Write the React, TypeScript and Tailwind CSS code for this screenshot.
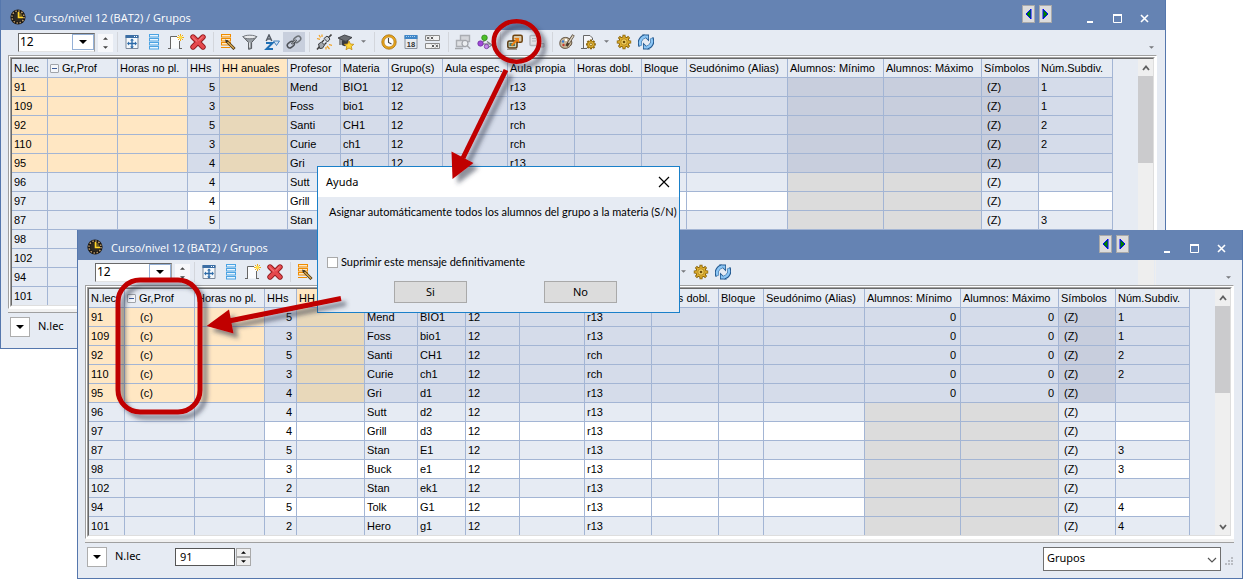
import React, { useId, useState } from 'react';
import clsx from 'clsx';

interface Lesson {
  id: string;
  hours: number;
  teacher: string;
  subject: string;
  room: string;
  subdivision: string;
}

const LESSONS: Lesson[] = [
  { id: '91', hours: 5, teacher: 'Mend', subject: 'BIO1', room: 'r13', subdivision: '1' },
  { id: '109', hours: 3, teacher: 'Foss', subject: 'bio1', room: 'r13', subdivision: '1' },
  { id: '92', hours: 5, teacher: 'Santi', subject: 'CH1', room: 'rch', subdivision: '2' },
  { id: '110', hours: 3, teacher: 'Curie', subject: 'ch1', room: 'rch', subdivision: '2' },
  { id: '95', hours: 4, teacher: 'Gri', subject: 'd1', room: 'r13', subdivision: '' },
  { id: '96', hours: 4, teacher: 'Sutt', subject: 'd2', room: 'r13', subdivision: '' },
  { id: '97', hours: 4, teacher: 'Grill', subject: 'd3', room: 'r13', subdivision: '' },
  { id: '87', hours: 5, teacher: 'Stan', subject: 'E1', room: 'r13', subdivision: '3' },
  { id: '98', hours: 3, teacher: 'Buck', subject: 'e1', room: 'r13', subdivision: '3' },
  { id: '102', hours: 2, teacher: 'Stan', subject: 'ek1', room: 'r13', subdivision: '' },
  { id: '94', hours: 5, teacher: 'Tolk', subject: 'G1', room: 'r13', subdivision: '4' },
  { id: '101', hours: 2, teacher: 'Hero', subject: 'g1', room: 'r13', subdivision: '4' },
];

// The first five lessons are the selected block
const SELECTED_COUNT = 5;

const COLUMNS = [
  { title: 'N.lec', width: 'w-[36px]' },
  { title: 'Gr,Prof', width: 'w-[70px]' },
  { title: 'Horas no pl.', width: 'w-[70px]' },
  { title: 'HHs', width: 'w-[32px]' },
  { title: 'HH anuales', width: 'w-[68px]' },
  { title: 'Profesor', width: 'w-[53px]' },
  { title: 'Materia', width: 'w-[48px]' },
  { title: 'Grupo(s)', width: 'w-[54px]' },
  { title: 'Aula espec.', width: 'w-[65px]' },
  { title: 'Aula propia', width: 'w-[67px]' },
  { title: 'Horas dobl.', width: 'w-[67px]' },
  { title: 'Bloque', width: 'w-[45px]' },
  { title: 'Seudónimo (Alias)', width: 'w-[101px]' },
  { title: 'Alumnos: Mínimo', width: 'w-[96px]' },
  { title: 'Alumnos: Máximo', width: 'w-[98px]' },
  { title: 'Símbolos', width: 'w-[57px]' },
  { title: 'Núm.Subdiv.', width: 'w-[74px]' },
];

function Svg({ children, className = 'size-4' }: { children: React.ReactNode; className?: string }) {
  return (
    <svg viewBox="0 0 16 16" className={clsx('shrink-0', className)} fill="none" aria-hidden="true">
      {children}
    </svg>
  );
}

const AppIcon = () => (
  <Svg>
    <circle cx="8" cy="8" r="7.6" fill="#1b1712" />
    <circle cx="8" cy="8" r="6" stroke="#b99a6b" strokeWidth="1.6" strokeDasharray="1.4 1.7" />
    <circle cx="8" cy="8" r="4.6" fill="#2e2a22" />
    <path d="M8 8V3.5A4.5 4.5 0 0 1 12.5 8z" fill="#6b5a20" />
    <path d="M8.5 3v5.5H13" stroke="#ffd42a" strokeWidth="1.6" />
  </Svg>
);

const GridPlusIcon = () => (
  <Svg>
    <path d="M2 1.5h12v13H2z" fill="#f4f8fc" stroke="#7d8a9c" />
    <path d="M1.5 1h13v3h-13z" fill="#3b6ea5" />
    <path d="M10 2h1v1h-1zM12 2h1v1h-1z" fill="#fff" />
    <path d="M8 5.5v8M4 9.5h8" stroke="#2c6aa8" strokeWidth="1.4" />
    <path d="M8 4.5l2 2H6zM8 14.5l2-2H6zM3 9.5l2-2v4zM13 9.5l-2-2v4z" fill="#2c6aa8" />
  </Svg>
);

const RowsIcon = () => (
  <Svg>
    {[1, 5, 9, 13].map((y) => (
      <rect key={y} x="3.5" y={y - 0.5} width="9" height="2.5" fill="#eaf6ff" stroke="#4ba3e3" />
    ))}
  </Svg>
);

const NewPageIcon = () => (
  <Svg>
    <path d="M2.5 2.5h9v12h-9z" fill="#fbfcfe" />
    <path d="M2.5 14V2.5H9M11.5 7v7" stroke="#666" />
    <path d="M0 14.5h3M11 14.5h3" stroke="#666" />
    <path d="M12.5 0v7M9 3.5h7M10 1l5 5M15 1l-5 5" stroke="#f0a818" />
    <circle cx="12.5" cy="3.5" r="1.8" fill="#ffe14a" />
  </Svg>
);

const DeleteIcon = () => (
  <Svg>
    <path d="M3 3l10 10M13 3L3 13" stroke="#8e1a1e" strokeWidth="5.4" strokeLinecap="round" />
    <path d="M3 3l10 10M13 3L3 13" stroke="#e5484d" strokeWidth="3.8" strokeLinecap="round" />
    <path d="M2.6 3.2L7 7.4M12.6 2.8L9 6.4" stroke="#f58a8d" strokeLinecap="round" />
  </Svg>
);

const RowsPencilIcon = () => (
  <Svg>
    {[1, 5, 9].map((y) => (
      <rect key={y} x="1.5" y={y - 0.5} width="9" height="2.5" fill="#ffe9c4" stroke="#f08c00" />
    ))}
    <path d="M1 13.5h9" stroke="#f08c00" />
    <path d="M6.5 7l8 8" stroke="#4a3412" strokeWidth="3" />
    <path d="M7.5 8l6.5 6.5" stroke="#d8a850" strokeWidth="1.4" />
    <path d="M5 5.5l3 1-2 2z" fill="#333" />
  </Svg>
);

const FunnelIcon = () => (
  <Svg>
    <path d="M.8 2.5h14L9.6 8.5v6l-3 .8V8.5z" fill="#9aa0a6" stroke="#55595e" />
    <ellipse cx="7.8" cy="3" rx="6.6" ry="1.8" fill="#e8eaec" stroke="#666a70" strokeWidth=".9" />
    <path d="M7.6 8.5v5" stroke="#e2e4e6" />
  </Svg>
);

const SortIcon = () => (
  <Svg>
    <path d="M2.2 7L5 1l2.8 6M3.3 5h3.4" stroke="#555c66" strokeWidth="1.5" />
    <path d="M2 9h6.5L2.5 15H9" stroke="#1f6fb5" strokeWidth="2" />
    <path d="M9.5 7h6l-3 4.5z" fill="#cfe2f5" stroke="#3776b4" strokeWidth=".9" />
  </Svg>
);

const LinkIcon = () => (
  <Svg>
    <rect x="1" y="8" width="7.500" height="5" rx="2.5" transform="rotate(-38 5 10.5)" stroke="#4e5258" strokeWidth="1.500" />
    <rect x="7.500" y="3" width="7.500" height="5" rx="2.5" transform="rotate(-38 11 5.5)" stroke="#6d7278" strokeWidth="1.500" />
    <path d="M5.500 10l5-4" stroke="#44484e" strokeWidth="1.800" />
    <path d="M6 9.500l4-3.200" stroke="#c5c8cc" strokeWidth=".8" />
  </Svg>
);

const PlugIcon = () => (
  <Svg>
    <path d="M1 15.5l3-3.5M12 4l3.5-3.5" stroke="#444" strokeWidth="1.6" />
    <path d="M2.5 10l3-2 3 3-2 3.2-2.8.3z" fill="#a4a8ae" stroke="#3c3f44" />
    <path d="M8 4.5L11 2l3 3-2.5 3z" fill="#c9cdd2" stroke="#3c3f44" />
    <path d="M6 8l2-2M8.5 10.5l2-2" stroke="#333" strokeWidth="1.2" />
    <path d="M3 1l1.5 2.5M1 4.5l3 .8M6 .5v2.5M11 12l2.5 3M13 10.5l3 1M10 13v2.5" stroke="#f0a020" strokeWidth="1.2" />
  </Svg>
);

const GraduateIcon = () => (
  <Svg>
    <path d="M0 4l6.5-3L14 3.5 8 7.5z" fill="#6a6d72" stroke="#2e3033" strokeWidth=".8" />
    <path d="M3.5 5.8v5c2 1.8 5 1.8 7 0v-5L8 7.5z" fill="#3a3c40" />
    <path d="M2 5v6" stroke="#333" />
    <path d="M11 7l1.4 3 3.4.3-2.5 2.2.7 3.2-3-1.7-3 1.7.8-3.2L6.300 10.300l3.300-.3z" fill="#ffd83a" stroke="#c08a10" strokeWidth=".8" />
  </Svg>
);

const ClockIcon = () => (
  <Svg>
    <circle cx="8" cy="8" r="7.2" fill="#e8a51c" stroke="#a8700c" strokeWidth=".8" />
    <circle cx="8" cy="8" r="5" fill="#fbfcff" stroke="#b07c18" strokeWidth=".7" />
    <path d="M7.500 4v4.500l3 1.500" stroke="#444" strokeWidth="1.1" />
  </Svg>
);

const CalendarIcon = () => (
  <Svg>
    <path d="M2 1.500h12v13H2z" fill="#e9ecf0" stroke="#8a929e" />
    <path d="M1.500 1h13v4h-13z" fill="#3f86c8" />
    <path d="M3 2.500h10" stroke="#a8d0f2" strokeDasharray="1 1" />
    <text x="8" y="13" textAnchor="middle" fontSize="7.500" fontWeight="700" fill="#333" fontFamily="Liberation Sans, sans-serif">18</text>
  </Svg>
);

const MatrixIcon = () => (
  <Svg>
    <path d="M.5 1.500h14v5H.5zM.5 9.500h14v5H.5z" fill="#f2f2f2" stroke="#8a8a8a" />
    <path d="M2 2.800l2.400 2.400M4.400 2.800L2 5.200M5.800 2.800l2.400 2.400M8.200 2.800L5.800 5.200M6.800 10.800l2.400 2.400M9.200 10.800l-2.400 2.400M10.600 10.800l2.400 2.400M13 10.800l-2.400 2.400" stroke="#333" strokeWidth=".8" />
  </Svg>
);

const SearchWindowsIcon = () => (
  <Svg>
    <path d="M5.500 1.500h9v6h-9z" fill="#d4d6da" stroke="#aaadb2" strokeWidth="1.400" />
    <path d="M1.500 6.500h9v6h-9z" fill="#dfe1e4" stroke="#aaadb2" strokeWidth="1.400" />
    <circle cx="10" cy="9.500" r="3" fill="#eceef1" stroke="#9fa2a8" strokeWidth="1.200" />
    <path d="M12.200 11.700l3 3M0 14.500h8" stroke="#a4a7ac" strokeWidth="1.400" />
  </Svg>
);

const NodesIcon = () => (
  <Svg>
    <path d="M4 10l6-5.500M4 10h9" stroke="#666" />
    <path d="M10 7.500l5 3.500-4 2.500" stroke="#777b80" strokeWidth="1.200" />
    <circle cx="7.500" cy="3.800" r="2.800" fill="#4cbf2a" stroke="#2a7d14" strokeWidth=".7" />
    <circle cx="3.500" cy="9.500" r="2.700" fill="#a04ad8" stroke="#652696" strokeWidth=".7" />
    <circle cx="9.500" cy="12.500" r="2.200" fill="#c88ae8" stroke="#652696" strokeWidth=".7" />
  </Svg>
);

const AssignIcon = () => (
  <Svg>
    <rect x="6" y="1.200" width="9.200" height="7" rx="1.500" fill="#d8c8a8" stroke="#6e4410" strokeWidth="1.500" />
    <rect x=".8" y="7" width="9.200" height="7" rx="1.500" fill="#c9cfb8" stroke="#5a3a10" strokeWidth="1.500" />
    <path d="M2.500 9h5.500v3H2.500z" fill="#4c7a6a" />
    <path d="M4.500 11.500l5-5" stroke="#f08010" strokeWidth="2" />
    <path d="M7 4h5v5z" fill="#f08010" />
    <path d="M0 15.300h10" stroke="#8a8478" />
  </Svg>
);

const DisabledRowsIcon = () => (
  <Svg>
    <rect x="1" y="1.500" width="8" height="10" rx="1" fill="#dfe1e5" stroke="#b4b7bc" strokeWidth="1.400" />
    <path d="M3 4.500h4M3 7h4" stroke="#b4b7bc" />
    <path d="M8 9.500h7v3.500H8z" fill="#d5d7db" stroke="#aeb1b6" />
  </Svg>
);

const PaletteIcon = () => (
  <Svg>
    <path d="M1 8C1.500 4 6 2.500 9 4s5 4 3 7-5 4-8 3-3.500-4-3-6z" fill="#c8b89a" stroke="#5a4a38" />
    <circle cx="4" cy="7.500" r="1.200" fill="#3b7ad0" />
    <circle cx="7" cy="6" r="1.200" fill="#fff" />
    <circle cx="4.500" cy="11" r="1.200" fill="#c83a30" />
    <path d="M14.500 1L7.500 12" stroke="#4a3a2a" strokeWidth="2.800" />
    <path d="M14.300 1.500L9.500 9" stroke="#d8d0c0" strokeWidth="1.400" />
  </Svg>
);

const GEAR_TEETH = 'M8 .8v14.400M.8 8h14.400M2.900 2.900l10.200 10.200M13.100 2.900L2.900 13.100';

const GearIcon = () => (
  <Svg>
    <path d={GEAR_TEETH} stroke="#8a6408" strokeWidth="3" />
    <circle cx="8" cy="8" r="5.200" fill="#e0b030" stroke="#8a6408" />
    <path d="M8 1.500v13M1.500 8h13M3.400 3.400l9.200 9.200M12.600 3.400l-9.200 9.200" stroke="#e0b030" strokeWidth="1.300" />
    <circle cx="8" cy="8" r="3.200" fill="#f0cf60" stroke="#a87c14" strokeWidth=".8" />
    <circle cx="8" cy="8" r="1.300" fill="#6e5008" />
  </Svg>
);

const PageGearIcon = () => (
  <Svg>
    <path d="M2.500 14.500V1.500h7l2 2v4" fill="#f6f7fa" />
    <path d="M2.500 14V1.500h6.500l2.500 2.500v2M0 14.500h6" stroke="#666" />
    <g transform="translate(4.500 5) scale(.68)">
      <path d={GEAR_TEETH} stroke="#8a6408" strokeWidth="3.200" />
      <circle cx="8" cy="8" r="5.200" fill="#e0b030" stroke="#8a6408" />
      <circle cx="8" cy="8" r="2" fill="#f8e8a8" stroke="#6e5008" />
    </g>
  </Svg>
);

const RefreshIcon = () => (
  <Svg>
    <path d="M2.500 12A6.500 6.500 0 0 1 7 2.500M13.500 4A6.500 6.500 0 0 1 9 13.500" stroke="#22588f" strokeWidth="4" />
    <path d="M4 .5h7v7z" fill="#22588f" />
    <path d="M12 15.500H5v-7z" fill="#22588f" />
    <path d="M2.700 11.500A6 6 0 0 1 7.500 2.800M13.300 4.500a6 6 0 0 1-4.800 8.700" stroke="#8cc6f5" strokeWidth="2.400" />
    <path d="M6 1.400h4.200v4.200zM10 14.600H5.800v-4.200z" fill="#8cc6f5" />
  </Svg>
);

// Small solid triangle used by every drop-down and spinner
function Caret({ up = false, className }: { up?: boolean; className?: string }) {
  return (
    <svg viewBox="0 0 8 4" className={clsx('shrink-0 fill-current', className)} aria-hidden="true">
      <path d={up ? 'M0 4h8L4 0z' : 'M0 0h8L4 4z'} />
    </svg>
  );
}

function ToolButton({ label, active, children }: { label: string; active?: boolean; children: React.ReactNode }) {
  return (
    <button
      type="button"
      aria-label={label}
      className={clsx('w-[22px] h-5 shrink-0 flex items-center justify-center', active && 'bg-[#c8cfdd]')}
    >
      {children}
    </button>
  );
}

function MenuButton({ label }: { label: string }) {
  return (
    <button type="button" aria-label={label} className="w-[13px] h-5 shrink-0 flex items-center justify-center text-[#77797d]">
      <Caret className="w-[5px] h-[3px]" />
    </button>
  );
}

const Separator = () => (
  <div className="w-2 shrink-0 flex justify-center">
    <div className="w-px h-5 bg-[#d3d6dc]" />
  </div>
);

function Toolbar({ strip }: { strip: boolean }) {
  return (
    <div className="h-[25px] flex items-center pl-[17px]">
      <div className="relative w-[77px] h-[19px] shrink-0">
        <select
          aria-label="Curso/nivel"
          className="block appearance-none w-full h-full bg-white border border-t-[#696969] border-l-[#696969] border-b-[#e3e3e3] border-r-[#a0a0a0] pl-px pb-0.5 font-['Noto_Sans',sans-serif] text-[12px] leading-4 text-black"
        >
          <option>12</option>
        </select>
        <div className="absolute right-px top-px w-[22px] h-4 bg-white border border-[#94b0d6] flex items-center justify-center pointer-events-none">
          <Caret className="w-2 h-1" />
        </div>
      </div>
      <div className="w-[15px] ml-[3px] h-[18px] shrink-0 bg-[#f7f8fb] flex flex-col items-center justify-around text-[#444]">
        <button type="button" aria-label="Anterior">
          <Caret up className="w-[5px] h-[3px]" />
        </button>
        <button type="button" aria-label="Siguiente">
          <Caret className="w-[5px] h-[3px]" />
        </button>
      </div>
      <div className="flex items-center pb-0.5">
        <Separator />
        <ToolButton label="Ajustar"><GridPlusIcon /></ToolButton>
        <ToolButton label="Filas"><RowsIcon /></ToolButton>
        <ToolButton label="Nuevo"><NewPageIcon /></ToolButton>
        <ToolButton label="Borrar"><DeleteIcon /></ToolButton>
        <Separator />
        <ToolButton label="Editar filas"><RowsPencilIcon /></ToolButton>
        <ToolButton label="Filtrar"><FunnelIcon /></ToolButton>
        <ToolButton label="Ordenar"><SortIcon /></ToolButton>
        <ToolButton label="Enlazar" active><LinkIcon /></ToolButton>
        <Separator />
        <ToolButton label="Conectar"><PlugIcon /></ToolButton>
        <ToolButton label="Alumnos"><GraduateIcon /></ToolButton>
        <MenuButton label="Más alumnos" />
        <Separator />
        <ToolButton label="Horario"><ClockIcon /></ToolButton>
        <ToolButton label="Calendario"><CalendarIcon /></ToolButton>
        <ToolButton label="Matriz"><MatrixIcon /></ToolButton>
        <Separator />
        <ToolButton label="Buscar"><SearchWindowsIcon /></ToolButton>
        <ToolButton label="Relaciones"><NodesIcon /></ToolButton>
        <Separator />
        <ToolButton label="Asignar alumnos"><AssignIcon /></ToolButton>
        <ToolButton label="Quitar alumnos"><DisabledRowsIcon /></ToolButton>
        <Separator />
        <ToolButton label="Colores"><PaletteIcon /></ToolButton>
        <ToolButton label="Página"><PageGearIcon /></ToolButton>
        <MenuButton label="Más páginas" />
        <ToolButton label="Configurar"><GearIcon /></ToolButton>
        <ToolButton label="Actualizar"><RefreshIcon /></ToolButton>
      </div>
      <div className="ml-auto h-full flex">
        {strip && <div className="w-4 bg-[#eeeeee]" />}
        {strip && <div className="w-px ml-px bg-[#eeeeee]" />}
      </div>
      <button
        type="button"
        aria-label="Opciones de barra"
        className={clsx('self-end mb-[6px] mr-[11px] text-[#77797d]', strip ? 'ml-[70px]' : 'ml-0')}
      >
        <Caret className="w-[5px] h-[3px]" />
      </button>
    </div>
  );
}

function TitleBar() {
  return (
    <div className="h-[30px] bg-[#6583b3] pt-1 pl-[9px] pr-4 flex items-center text-white">
      <AppIcon />
      <h1 className="ml-2 mt-0.5 font-['Open_Sans',sans-serif] text-[11px] leading-4 whitespace-nowrap">
        Curso/nivel 12 (BAT2) / Grupos
      </h1>
      <div className="ml-auto self-start flex gap-1 mt-px">
        {['Anterior', 'Siguiente'].map((label, i) => (
          <button
            key={label}
            type="button"
            aria-label={label}
            className="w-[13px] h-[18px] bg-[#dcdcdc] border border-[#a9a9a9] flex items-center justify-center"
          >
            <svg viewBox="0 0 7 12" className="w-[7px] h-3" aria-hidden="true">
              <path d={i === 0 ? 'M6 1v10L1 6z' : 'M1 1v10l5-5z'} fill="#008000" stroke="#0000ff" />
            </svg>
          </button>
        ))}
      </div>
      <div className="flex items-center gap-[18px] ml-[34px] mt-0.5">
        <button type="button" aria-label="Minimizar">
          <svg viewBox="0 0 9 9" className="w-[9px] h-[9px]" aria-hidden="true">
            <path d="M1 7h6v2H1z" fill="#fff" />
          </svg>
        </button>
        <button type="button" aria-label="Maximizar">
          <svg viewBox="0 0 9 9" className="w-[9px] h-[9px]" aria-hidden="true">
            <path d="M.5 1h8v7.500h-8z" fill="none" stroke="#fff" />
            <path d="M0 1h9" stroke="#fff" strokeWidth="2" />
          </svg>
        </button>
        <button type="button" aria-label="Cerrar">
          <svg viewBox="0 0 9 9" className="w-[9px] h-[9px]" aria-hidden="true">
            <path d="M1 1l7 7M8 1L1 8" stroke="#fff" strokeWidth="1.600" />
          </svg>
        </button>
      </div>
    </div>
  );
}

function cellBackground(row: number, col: number, assigned: boolean) {
  const studentCol = col === 13 || col === 14;
  if (row < SELECTED_COUNT) {
    if (col < 3) return 'bg-[#ffe7c3]';
    if (col === 4) return 'bg-[#e8d8ba]';
    if (col === 15 || (studentCol && !assigned)) return 'bg-[#c8cedd]';
    return 'bg-[#d5dcea]';
  }
  if (studentCol) return 'bg-[#dcdcdc]';
  if (col < 3 || col === 15) return 'bg-[#e6ebf3]';
  return row % 2 === 0 ? 'bg-white' : 'bg-[#e6ebf3]';
}

function LessonTable({ assigned }: { assigned: boolean }) {
  return (
    <table className="grow table-fixed border-separate border-spacing-0 w-0 text-[11px] leading-4 text-black">
      <colgroup>
        {COLUMNS.map((column) => (
          <col key={column.title} className={column.width} />
        ))}
        <col />
      </colgroup>
      <thead>
        <tr>
          {COLUMNS.map((column, col) => (
            <th
              key={column.title}
              scope="col"
              className={clsx(
                'h-[19px] p-0 pl-0.5 border-r border-b border-[#a3b5d4] text-left font-normal whitespace-nowrap overflow-hidden',
                col === 4 ? 'bg-[#ffe7c3]' : 'bg-[#e6ebf3]'
              )}
            >
              {col === 1 ? (
                <span className="flex items-center gap-[3px]">
                  <button
                    type="button"
                    aria-label="Contraer Gr,Prof"
                    className="size-[9px] border border-[#a0a4aa] rounded-[1px] bg-[#f4f6fa] flex items-center justify-center"
                  >
                    <span className="w-[5px] h-px bg-[#3c5a96]" />
                  </button>
                  {column.title}
                </span>
              ) : (
                column.title
              )}
            </th>
          ))}
          <td />
        </tr>
      </thead>
      <tbody>
        {LESSONS.map((lesson, row) => {
          const selected = row < SELECTED_COUNT;
          const students = assigned && selected ? '0' : '';
          const values = [
            lesson.id, assigned && selected ? '(c)' : '', '', lesson.hours, '', lesson.teacher,
            lesson.subject, '12', '', lesson.room, '', '', '', students, students, '(Z)', lesson.subdivision,
          ];
          const last = row === LESSONS.length - 1;
          return (
            <tr key={lesson.id}>
              {values.map((value, col) => (
                <td
                  key={col}
                  className={clsx(
                    'p-0 border-r border-[#a3b5d4] whitespace-nowrap overflow-hidden',
                    last ? 'h-[18px]' : 'h-[19px] border-b',
                    cellBackground(row, col, assigned),
                    col === 3 || col === 13 || col === 14
                      ? 'text-right pr-1'
                      : col === 1
                        ? 'pl-[15px]'
                        : col === 15
                          ? 'pl-[5px]'
                          : 'pl-0.5'
                  )}
                >
                  {value}
                </td>
              ))}
              <td />
            </tr>
          );
        })}
      </tbody>
    </table>
  );
}

function ScrollBar() {
  return (
    <div className="w-[15px] shrink-0 bg-[#efefef] flex flex-col">
      <button type="button" aria-label="Subir" className="h-[17px] flex items-center justify-center">
        <svg viewBox="0 0 8 6" className="w-2 h-1.5" fill="none" aria-hidden="true">
          <path d="M1 5l3-3.500L7 5" stroke="#606060" strokeWidth="1.800" />
        </svg>
      </button>
      <div className="h-[87px] bg-[#cbcbcd]" />
      <button type="button" aria-label="Bajar" className="h-[17px] mt-auto flex items-center justify-center">
        <svg viewBox="0 0 8 6" className="w-2 h-1.5" fill="none" aria-hidden="true">
          <path d="M1 1l3 3.500L7 1" stroke="#606060" strokeWidth="1.800" />
        </svg>
      </button>
    </div>
  );
}

function Footer() {
  const id = useId();
  const [lesson, setLesson] = useState('91');

  return (
    <div className="h-[35px] px-[9px] flex items-center pb-2 font-['Noto_Sans',sans-serif] text-[11px] text-black">
      <button type="button" aria-label="Elegir campo" className="size-5 bg-white border border-[#adadad] flex items-center justify-center">
        <Caret className="w-2 h-1" />
      </button>
      <label htmlFor={id} className="ml-2 w-[60px]">
        N.lec
      </label>
      <input
        id={id}
        type="text"
        value={lesson}
        onChange={(e) => setLesson(e.target.value)}
        className="w-[60px] h-[18px] bg-white border border-[#555] pl-1"
      />
      <div className="flex flex-col ml-px">
        <button type="button" aria-label="Más" className="w-[15px] h-[9px] border border-[#a9a9a9] bg-[#eeeeee] flex items-center justify-center">
          <Caret up className="w-[5px] h-[3px]" />
        </button>
        <button type="button" aria-label="Menos" className="w-[15px] h-[9px] border border-[#a9a9a9] bg-[#eeeeee] flex items-center justify-center">
          <Caret className="w-[5px] h-[3px]" />
        </button>
      </div>
      <div className="relative ml-auto w-[178px] h-6 mt-1">
        <select
          aria-label="Vista"
          className="block appearance-none w-full h-full bg-white border border-[#707070] pl-[3px] text-[11px]"
        >
          <option>Grupos</option>
        </select>
        <svg viewBox="0 0 10 6" className="absolute right-1 top-[10px] w-2.5 h-1.5 pointer-events-none" fill="none" aria-hidden="true">
          <path d="M1 1l4 4 4-4" stroke="#555" strokeWidth="1.200" />
        </svg>
      </div>
      <svg viewBox="0 0 8 8" className="ml-1 mt-2 size-2" fill="#b9bcc2" aria-hidden="true">
        <path d="M6 0h2v2H6zM3 3h2v2H3zM6 3h2v2H6zM0 6h2v2H0zM3 6h2v2H3zM6 6h2v2H6z" />
      </svg>
    </div>
  );
}

function GroupsWindow({ assigned = false, className }: { assigned?: boolean; className: string }) {
  return (
    <section className={clsx('absolute bg-[#e6ebf3] border-x border-b border-[#5577ad] flex flex-col', className)}>
      <TitleBar />
      <Toolbar strip={assigned} />
      <div className="ml-[7px] mr-2 border border-t-[#a0a0a0] border-l-[#a0a0a0] border-b-white border-r-white bg-white p-px">
        <div className="border border-t-[#a0a0a0] border-l-[#a0a0a0] border-b-white border-r-white">
          <div className="flex border border-t-[#696969] border-l-[#696969] border-b-[#dedede] border-r-[#dedede] bg-[#e6ebf3] overflow-hidden">
            <LessonTable assigned={assigned} />
            <ScrollBar />
          </div>
        </div>
      </div>
      <div className="ml-[7px] mr-2 h-1 bg-[#f0f0f0] border-b border-[#a0a0a0]" />
      <Footer />
    </section>
  );
}

function HelpDialog() {
  const [suppress, setSuppress] = useState(false);

  return (
    <div
      role="dialog"
      aria-label="Ayuda"
      className="absolute left-[317px] top-[166px] w-[363px] bg-[#e6ebf3] border border-[#1a80c9] font-[Lato,sans-serif] text-[11px] leading-4 text-black"
    >
      <div className="h-[30px] bg-white flex items-center justify-between pl-2 pr-[9px]">
        <h2 className="font-['Noto_Sans',sans-serif] text-[11px]">Ayuda</h2>
        <button type="button" aria-label="Cerrar">
          <svg viewBox="0 0 12 12" className="size-3" aria-hidden="true">
            <path d="M1 1l10 10M11 1L1 11" stroke="#000" strokeWidth="1.200" />
          </svg>
        </button>
      </div>
      <p className="mt-[7px] ml-[11px] whitespace-nowrap">
        Asignar automáticamente todos los alumnos del grupo a la materia (S/N)
      </p>
      <label className="mt-[34px] ml-[9px] flex items-center gap-[3px]">
        <input
          type="checkbox"
          checked={suppress}
          onChange={(e) => setSuppress(e.target.checked)}
          className="appearance-none size-[11px] bg-white border border-[#a9a9a9] checked:bg-[#1a80c9]"
        />
        Suprimir este mensaje definitivamente
      </label>
      <div className="flex gap-[77px] mt-[11px] mb-[9px] ml-[76px] font-['Noto_Sans',sans-serif]">
        <button type="button" className="w-[73px] h-[22px] bg-[#dcdcdc] border border-[#a9a9a9]">Si</button>
        <button type="button" className="w-[73px] h-[22px] bg-[#dcdcdc] border border-[#a9a9a9]">No</button>
      </div>
    </div>
  );
}

// Red markers that point from the toolbar button to its result
function Annotations() {
  return (
    <svg viewBox="0 0 1244 580" className="absolute left-0 top-0 w-[1244px] h-[580px] pointer-events-none" fill="none" aria-hidden="true">
      <defs>
        <filter id="marker-shadow" x="-20%" y="-20%" width="150%" height="150%">
          <feDropShadow dx="5" dy="5" stdDeviation="2" floodColor="#303848" floodOpacity=".55" />
        </filter>
      </defs>
      <g filter="url(#marker-shadow)" stroke="#c00000">
        <ellipse cx="516.500" cy="41.500" rx="22.700" ry="20.200" strokeWidth="4.600" />
        <path d="M506 70L463 158" strokeWidth="5" />
        <path d="M452.500 179l-1-27.500L473.500 163z" fill="#c00000" stroke="none" />
        <rect x="118" y="280" width="82" height="132" rx="22" strokeWidth="5" />
        <path d="M341 298.500L229 321" strokeWidth="5" />
        <path d="M206.500 326l22.500-16.500 4.500 24z" fill="#c00000" stroke="none" />
      </g>
    </svg>
  );
}

export default function App() {
  return (
    <main className="relative min-h-[580px] bg-white overflow-hidden font-['Liberation_Sans',Arial,sans-serif]">
      <GroupsWindow className="left-0 right-[78px] top-0" />
      <GroupsWindow assigned className="left-[77px] right-px top-[230px]" />
      <HelpDialog />
      <Annotations />
    </main>
  );
}
